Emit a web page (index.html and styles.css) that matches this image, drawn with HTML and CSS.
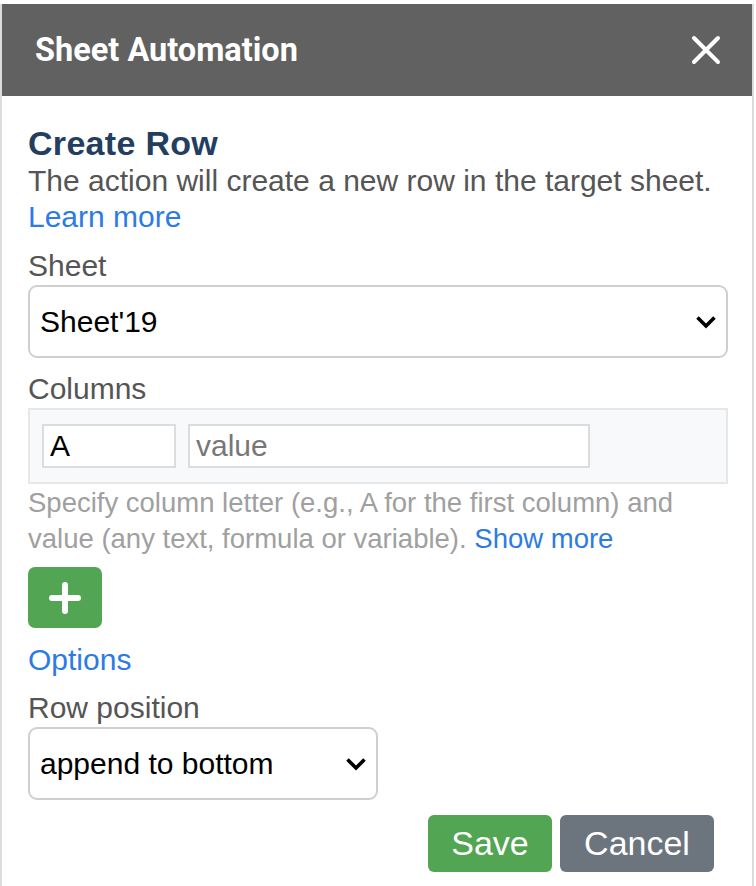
FILE: index.html
```html
<!DOCTYPE html>
<html lang="en">
<head>
    <meta charset="UTF-8">
    <meta name="viewport" content="width=device-width, initial-scale=1.0">
    <title>Sheet Automation</title>
    <link rel="stylesheet" href="styles.css">
</head>
<body>
    <div class="dialog">
        <div class="dialog-header">
            <span class="dialog-title">Sheet Automation</span>
            <svg class="close" width="30" height="30" viewBox="0 0 30 30">
                <path d="M3 3 L27 27 M27 3 L3 27" stroke="#fff" stroke-width="4" stroke-linecap="round"/>
            </svg>
        </div>
        <div class="dialog-body">
            <h2 class="action-title">Create Row</h2>
            <p class="desc">The action will create a new row in the target sheet.<br><a href="#" class="link">Learn more</a></p>

            <div class="field">
                <div class="label">Sheet</div>
                <div class="select">
                    <span>Sheet'19</span>
                    <svg width="22" height="14" viewBox="0 0 22 14">
                        <path d="M2.5 2.5 L11 11 L19.5 2.5" fill="none" stroke="#000" stroke-width="3.6"/>
                    </svg>
                </div>
            </div>

            <div class="field">
                <div class="label">Columns</div>
                <div class="columns">
                    <input type="text" class="col-letter" value="A">
                    <input type="text" class="col-value" placeholder="value">
                </div>
                <p class="help">Specify column letter (e.g., A for the first column) and value (any text, formula or variable). <a href="#" class="link">Show more</a></p>
            </div>

            <button class="btn-add">
                <svg width="32" height="32" viewBox="0 0 32 32">
                    <path d="M16 3 V29 M3 16 H29" stroke="#fff" stroke-width="6" stroke-linecap="round"/>
                </svg>
            </button>

            <div class="options"><a href="#" class="link">Options</a></div>

            <div class="field">
                <div class="label">Row position</div>
                <div class="select select-small">
                    <span>append to bottom</span>
                    <svg width="22" height="14" viewBox="0 0 22 14">
                        <path d="M2.5 2.5 L11 11 L19.5 2.5" fill="none" stroke="#000" stroke-width="3.6"/>
                    </svg>
                </div>
            </div>

            <div class="actions">
                <button class="btn btn-save">Save</button>
                <button class="btn btn-cancel">Cancel</button>
            </div>
        </div>
    </div>
</body>
</html>
```

FILE: styles.css
```css
body {
    margin: 0;
    font-family: "Liberation Sans", Arial, sans-serif;
    background: #fff;
}

.dialog {
    margin-top: 4px;
    width: 750px;
    min-height: 882px;
    border-left: 2px solid #dcdcdf;
    border-right: 2px solid #dcdcdf;
}

.dialog-header {
    height: 92px;
    background-color: #616161;
    display: flex;
    align-items: center;
    justify-content: space-between;
    padding: 0 31px 0 33px;
}

.dialog-title {
    font-family: Roboto, "Liberation Sans", sans-serif;
    font-weight: bold;
    font-size: 32.5px;
    color: #fff;
}

.dialog-body {
    padding: 27px 24px 10px 26px;
}

.action-title {
    margin: 0;
    font-size: 34px;
    letter-spacing: 0.3px;
    line-height: 40px;
    color: #233e5e;
}

.desc {
    margin: 0;
    font-size: 30px;
    line-height: 36px;
    color: #555;
}

.link {
    color: #2c7be5;
    text-decoration: none;
}

.field {
    margin-top: 13px;
}

.label {
    font-size: 30px;
    line-height: 36px;
    color: #555;
    margin-bottom: 1px;
}

.select {
    height: 69px;
    border: 2px solid #cfcfcf;
    border-radius: 9px;
    display: flex;
    align-items: center;
    justify-content: space-between;
    padding: 0 9px 0 10px;
    font-size: 30px;
    color: #000;
}

.select-small {
    width: 327px;
}

.columns {
    display: flex;
    gap: 12px;
    background-color: #f8f9fa;
    border: 2px solid #e6e7e9;
    padding: 14px 12px;
}

.columns input {
    height: 40px;
    border: 2px solid #dcdcdc;
    margin: 0;
    padding: 0 6px;
    font-family: "Liberation Sans", Arial, sans-serif;
    font-size: 30px;
    color: #000;
    outline: none;
}

.columns input::placeholder {
    color: #777;
}

.col-letter {
    width: 118px;
}

.col-value {
    width: 386px;
}

.help {
    margin: 1px 0 0;
    font-size: 27.5px;
    line-height: 36px;
    color: #a0a0a0;
}

.btn-add {
    margin-top: 10px;
    width: 74px;
    height: 61px;
    border: none;
    border-radius: 7px;
    background-color: #52a552;
    display: flex;
    align-items: center;
    justify-content: center;
    padding: 0;
}

.options {
    margin-top: 14px;
    font-size: 30px;
    line-height: 35px;
}

.actions {
    margin-top: 15px;
    display: flex;
    justify-content: flex-end;
    gap: 8px;
    padding-right: 14px;
}

.btn {
    height: 57px;
    border: none;
    border-radius: 6px;
    color: #fff;
    font-family: "Liberation Sans", Arial, sans-serif;
    font-size: 34px;
    padding: 0;
}

.btn-save {
    width: 124px;
    background-color: #52a552;
}

.btn-cancel {
    width: 154px;
    background-color: #6c757d;
}
```
